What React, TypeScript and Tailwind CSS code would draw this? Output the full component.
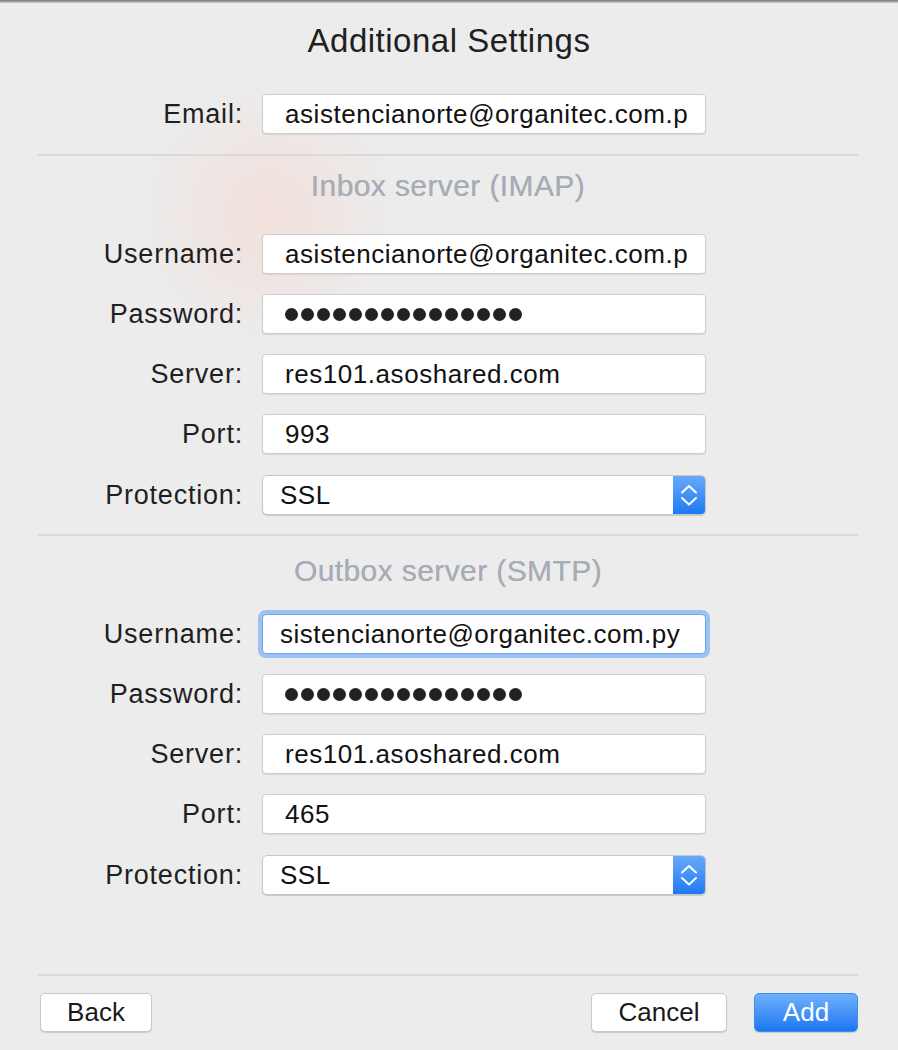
const font = { fontFamily: '"Liberation Sans", Arial, sans-serif' }

function Dots() {
  return (
    <div className="flex items-center gap-[3px]">
      {Array.from({ length: 15 }).map((_, i) => (
        <span key={i} className="w-[13px] h-[13px] rounded-full bg-[#222]" />
      ))}
    </div>
  )
}

function Row({ label, children }: { label: string; children: React.ReactNode }) {
  return (
    <div className="flex items-center">
      <div className="w-[205px] text-right text-[27px] tracking-[0.8px] text-[#1f1f1f] leading-[40px] whitespace-nowrap">
        {label}
      </div>
      <div className="ml-[19px] w-[444px]">{children}</div>
    </div>
  )
}

function Field({ value, focused, password }: { value?: string; focused?: boolean; password?: boolean }) {
  return (
    <div
      className={
        focused
          ? 'h-[40px] bg-white rounded-[4px] border border-[#6fa6ea] ring-4 ring-[#9bc2f0] flex items-center pl-[17px] text-[26px] tracking-[0.5px] text-[#111]'
          : 'h-[40px] bg-white rounded-[4px] border border-[#cdcdcd] shadow-[0_1px_1px_rgba(0,0,0,0.08)] flex items-center pl-[22px] text-[26px] tracking-[0.55px] text-[#111] overflow-hidden whitespace-nowrap'
      }
    >
      {password ? <Dots /> : value}
    </div>
  )
}

function Select({ value }: { value: string }) {
  return (
    <div className="h-[40px] bg-white rounded-[5px] border border-[#c6c6c6] shadow-[0_1px_1px_rgba(0,0,0,0.15)] flex items-center overflow-hidden">
      <div className="flex-1 pl-[17px] text-[26px] tracking-[0.5px] text-[#111]">{value}</div>
      <div className="w-[32px] h-full bg-gradient-to-b from-[#67a9f9] to-[#1a79f4] flex items-center justify-center">
        <svg width="18" height="32" viewBox="0 0 18 32" fill="none" stroke="white" strokeWidth="2" strokeLinecap="round" strokeLinejoin="round">
          <path d="M2 13.5L9 7l7 6.5" />
          <path d="M2 19l7 6.5 7-6.5" />
        </svg>
      </div>
    </div>
  )
}

function Button({ children, primary, width }: { children: React.ReactNode; primary?: boolean; width: string }) {
  return (
    <div
      className={
        (primary
          ? 'bg-gradient-to-b from-[#6db0fb] to-[#1a76f2] text-white border border-[#3d8cf0] '
          : 'bg-white text-[#1a1a1a] border border-[#c8c8c8] ') +
        'h-[39px] rounded-[5px] shadow-[0_1px_1px_rgba(0,0,0,0.15)] flex items-center justify-center text-[26px] ' +
        width
      }
    >
      {children}
    </div>
  )
}

export default function App() {
  return (
    <div
      style={font}
      className="w-[898px] h-[1050px] bg-[#ececec] bg-[radial-gradient(circle_at_268px_215px,rgba(246,214,204,0.55),rgba(236,236,236,0)_130px)] flex flex-col overflow-hidden"
    >
      <div className="h-[3px] bg-gradient-to-b from-[#767676] to-[#cfcfcf]" />

      <div className="mt-[18px] text-center text-[33px] tracking-[0.5px] leading-[40px] text-[#1f1f1f]">
        Additional Settings
      </div>

      <div className="pl-[38px] pr-[40px]">
        <div className="mt-[33px]">
          <Row label="Email:">
            <Field value="asistencianorte@organitec.com.p" />
          </Row>
        </div>

        <div className="mt-[20px] h-[2px] bg-[#d9d9d9]" />

        <div className="mt-[12px] text-center text-[30px] tracking-[0.4px] leading-[36px] text-[#a7adb6] [text-shadow:0_0_0.6px_#a7adb6]">
          Inbox server (IMAP)
        </div>

        <div className="mt-[30px] flex flex-col gap-[20px]">
          <Row label="Username:">
            <Field value="asistencianorte@organitec.com.p" />
          </Row>
          <Row label="Password:">
            <Field password />
          </Row>
          <Row label="Server:">
            <Field value="res101.asoshared.com" />
          </Row>
          <Row label="Port:">
            <Field value="993" />
          </Row>
          <div className="mt-[1px]">
            <Row label="Protection:">
              <Select value="SSL" />
            </Row>
          </div>
        </div>

        <div className="mt-[19px] h-[2px] bg-[#d9d9d9]" />

        <div className="mt-[17px] text-center text-[30px] tracking-[0.4px] leading-[36px] text-[#a7adb6] [text-shadow:0_0_0.6px_#a7adb6]">
          Outbox server (SMTP)
        </div>

        <div className="mt-[25px] flex flex-col gap-[20px]">
          <Row label="Username:">
            <Field value="sistencianorte@organitec.com.py" focused />
          </Row>
          <Row label="Password:">
            <Field password />
          </Row>
          <Row label="Server:">
            <Field value="res101.asoshared.com" />
          </Row>
          <Row label="Port:">
            <Field value="465" />
          </Row>
          <div className="mt-[1px]">
            <Row label="Protection:">
              <Select value="SSL" />
            </Row>
          </div>
        </div>

        <div className="mt-[79px] h-[2px] bg-[#d9d9d9]" />

        <div className="mt-[17px] flex items-center">
          <div className="ml-[2px]">
            <Button width="w-[112px]">Back</Button>
          </div>
          <div className="flex-1" />
          <Button width="w-[136px]">Cancel</Button>
          <div className="ml-[27px]">
            <Button primary width="w-[104px]">Add</Button>
          </div>
        </div>
      </div>
    </div>
  )
}
